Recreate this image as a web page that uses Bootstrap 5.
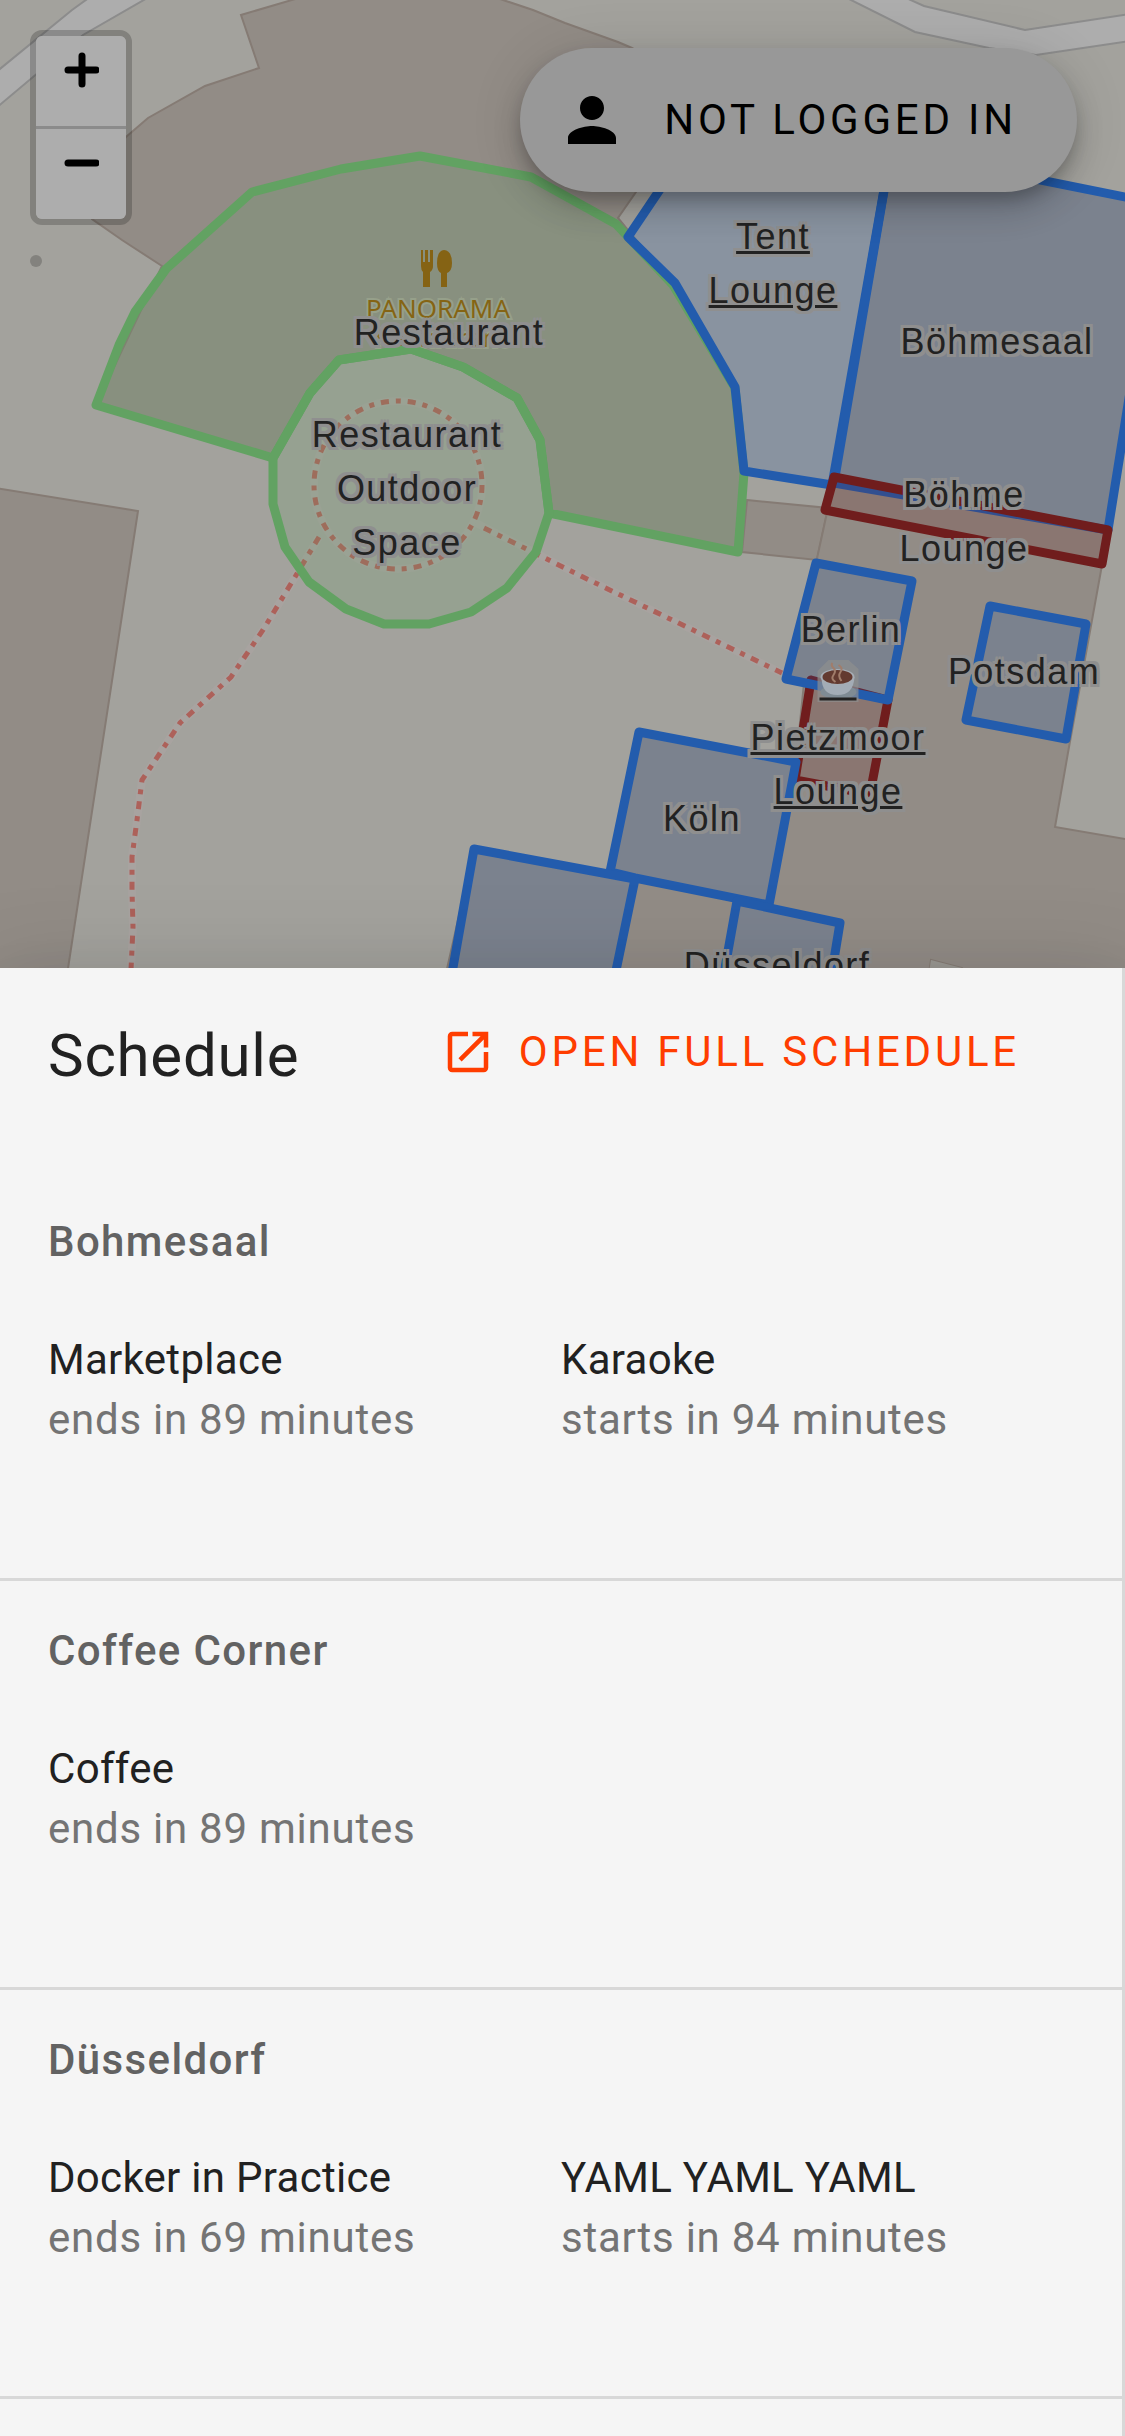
<!DOCTYPE html>
<html lang="en">
<head>
<meta charset="utf-8">
<meta name="viewport" content="width=device-width, initial-scale=1">
<title>Venue map and schedule</title>
<link rel="stylesheet" href="https://cdn.jsdelivr.net/npm/bootstrap@5.3.0/dist/css/bootstrap.min.css">
<style>
  body { font-family: Roboto, "Liberation Sans", sans-serif; background: #f5f5f5; color: #212121; }
  .venue-map { height: 968px; background: #a3a29d; }
  .map-art { position: absolute; top: 0; left: 0; }
  .road { fill: #adadad; stroke: #8c8c8c; stroke-width: 2; }
  .house { fill: #928c86; stroke: #857b74; stroke-width: 2; }
  .walk { fill: none; stroke: #ad615a; stroke-width: 5; stroke-dasharray: 8 7 5 7; }
  .walk-halo { fill: none; stroke: #a8a3a0; stroke-width: 8; }
  .zone { stroke-width: 9; stroke-linejoin: round; fill-opacity: .2; }
  .zone-green { stroke: #62a262; fill: #62a262; }
  .zone-blue { stroke: #235cad; fill: #235cad; }
  .zone-red { stroke: #701d1d; fill: #701d1d; }
  .poi { font: 26px "Noto Sans", sans-serif; fill: #8e5600; stroke: #a3a094; stroke-width: 4; paint-order: stroke; text-anchor: middle; }

  /* Labels pinned to rooms on the map */
  .pin { position: absolute; transform: translateX(-50%); font: 36px/54px "Liberation Sans", Arial, sans-serif; letter-spacing: .04em; color: #222; text-align: center; white-space: nowrap;
    text-shadow: 3px 3px #8f8f8f, -3px 3px #8f8f8f, 3px -3px #8f8f8f, -3px -3px #8f8f8f, 0 3px #8f8f8f, 0 -3px #8f8f8f, 3px 0 #8f8f8f, -3px 0 #8f8f8f; }
  a.pin { text-decoration: underline; }
  .pin-restaurant { left: 449px; top: 306px; }
  .pin-outdoor { left: 407px; top: 408px; }
  .pin-tent { left: 773px; top: 210px; }
  .pin-saal { left: 997px; top: 315px; }
  .pin-bohme { left: 964px; top: 468px; }
  .pin-berlin { left: 851px; top: 603px; }
  .pin-potsdam { left: 1024px; top: 645px; }
  .pin-pietzmoor { left: 838px; top: 657px; }
  .pin-koln { left: 702px; top: 792px; }
  .pin-dussel { left: 777px; top: 939px; }
  .cup { display: block; margin: 0 auto; }

  .map-zoom { position: absolute; left: 30px; top: 30px; border: 6px solid rgba(0,0,0,.2); border-radius: 12px; background-clip: padding-box; }
  .map-zoom button { width: 90px; height: 90px; padding: 16px 0 0; border: 0; background: #adadad; line-height: 1; display: flex; justify-content: center; align-items: flex-start; }
  .map-zoom button:first-child { border-radius: 6px 6px 0 0; box-sizing: content-box; height: 74px; border-bottom: 3px solid #8b8b8b; }
  .map-zoom button:last-child { border-radius: 0 0 6px 6px; }
  .map-dot { position: absolute; left: 30px; top: 255px; width: 12px; height: 12px; border-radius: 50%; background: #83827e; }

  .login-pill { position: absolute; right: 48px; top: 48px; height: 144px; padding: 0 60px 0 36px; gap: 36px; border: 0; border-radius: 72px; background: #989898; color: #000; font-size: 42px; line-height: 48px; letter-spacing: .09em;
    box-shadow: 0 9px 15px -3px rgba(0,0,0,.2), 0 18px 30px rgba(0,0,0,.14), 0 3px 54px rgba(0,0,0,.12); }

  .sheet { position: relative; background: #f5f5f5; border-right: 3px solid #d8d8d8; box-shadow: 0 24px 30px -15px rgba(0,0,0,.2), 0 48px 72px 6px rgba(0,0,0,.14), 0 18px 90px 15px rgba(0,0,0,.12); }
  .sheet-head { height: 204px; padding: 57px 102px 0 48px; }
  .sheet-title { font-size: 60px; line-height: 62px; font-weight: 400; letter-spacing: .0125em; margin: 0; }
  .open-link { gap: 24px; color: #ff3d00; font-size: 42px; line-height: 54px; letter-spacing: .09em; text-decoration: none; }
  .room { padding: 40px 0 128px; border-bottom: 3px solid #d8d8d8; }
  .room h2 { margin: 0 48px 58px; font-size: 42px; line-height: 60px; font-weight: 500; letter-spacing: .033em; color: #626262; }
  .slot { width: 513px; margin-left: 48px; flex: none; font-size: 42px; line-height: 60px; letter-spacing: .007em; }
  .slot p { margin: 0; }
  .slot + .slot { margin-left: 0; }
  .slot .when { color: #747474; letter-spacing: .018em; }
</style>
<script src="https://cdn.jsdelivr.net/npm/bootstrap@5.3.0/dist/js/bootstrap.bundle.min.js"></script>
</head>
<body class="d-flex flex-column vh-100 overflow-hidden">

<section class="venue-map position-relative overflow-hidden flex-shrink-0" aria-label="Venue map">
  <svg class="map-art" width="1125" height="968" viewBox="0 0 1125 968" aria-hidden="true">
    <path class="road" d="M-5 73 72 10 90-3H149L83 35-5 109Z"/>
    <path class="road" d="M845-3 915 32 989 48 1036 55 1130 41V14L1025 30 924 6 904-3Z"/>
    <path class="house" d="M-5 488 138 511 67 975H-5Z"/>
    <path class="house" d="M302-3 241 15 259 68 205 86 148 118 126 137 80 190 92 219 122 240 162 266 96 405 273 458 310 393 339 360 411 349 463 367 517 398 540 440 549 513 738 552 744 473 735 388 673 285 618 218 636 192 700 90 632 48 618 42 565 23 533 10 494-3Z"/>
    <path class="house" d="M747 500 828 508 817 560 742 552Z"/>
    <path class="house" d="M891 150 828 508 816 563 786 679 804 683 796 762 638 732 610 872 474 849 440 1000H970L962 968 931 960 925 1000 1160 1000 1160 845 1055 827 1069 747 1102 565 1160 205Z"/>
    <path d="M931 960 962 968V972H929Z" fill="#9a9893"/>
    <g class="walk-halo">
      <circle cx="398" cy="485" r="84"/>
      <path d="M319 537 295 577 263 630 231 677 180 723 142 780 137 820 132 857V890L133 927 131 970"/>
      <path d="M476 523 583 577 782 673"/>
    </g>
    <g class="walk">
      <circle cx="398" cy="485" r="84"/>
      <path d="M319 537 295 577 263 630 231 677 180 723 142 780 137 820 132 857V890L133 927 131 970"/>
      <path d="M484 528 583 577 782 673"/>
    </g>
    <g fill="#8e5400">
      <path d="M421 250h2v12h2v-12h3v12h2v-12h3v16q0 4-3 6v15h-7v-15q-2-2-2-6z"/>
      <path d="M444 250q8 1 8 13 0 8-5 10v14h-6v-14q-4-2-4-10 0-12 7-13z"/>
    </g>
    <text class="poi" x="438" y="318">PANORAMA</text>
    <text class="poi" x="441" y="347">Restaurant</text>
    <path class="zone zone-green" d="M96 405 119 345 135 312 166 269 252 192 341 169 420 156 531 177 616 224 673 285 735 388 744 473 738 552 549 513 540 440 517 398 463 367 411 349 339 360 310 393 273 458Z"/>
    <path class="zone zone-green" d="M273 458V504L285 547 309 582 346 609 384 624H429L471 612 507 588 536 552 549 513 540 440 517 398 463 367 411 349 339 360 310 393Z"/>
    <path class="zone zone-blue" d="M700 130 628 237 675 283 735 387 744 471 832 485 891 150Z"/>
    <path class="zone zone-blue" d="M891 150 834 483 1108 530 1160 204Z"/>
    <path class="zone zone-red" d="M834 477 1108 530 1102 564 825 510Z"/>
    <path class="zone zone-red" d="M811 680 888 700 870 794 795 780Z"/>
    <path class="zone zone-blue" d="M816 563 912 581 888 700 786 679Z"/>
    <path class="zone zone-blue" d="M990 606 1086 624 1066 739 966 720Z"/>
    <path class="zone zone-blue" d="M639 732 796 762 769 905 635 878 610 872Z"/>
    <path class="zone zone-blue" d="M474 849 560 865 635 879 612 990H449Z"/>
    <path class="zone zone-blue" d="M737 901 840 923 829 990H721Z"/>
  </svg>

  <span class="pin pin-restaurant">Restaurant</span>
  <span class="pin pin-outdoor">Restaurant<br>Outdoor<br>Space</span>
  <a class="pin pin-tent" href="#tent">Tent<br>Lounge</a>
  <span class="pin pin-saal">Böhmesaal</span>
  <span class="pin pin-bohme">Böhme<br>Lounge</span>
  <span class="pin pin-berlin">Berlin</span>
  <span class="pin pin-potsdam">Potsdam</span>
  <a class="pin pin-pietzmoor" href="#pietzmoor">
    <svg class="cup" width="44" height="54" viewBox="0 0 44 54" aria-label="Coffee">
      <path d="M12 3H32L42 12V45H1V14Z" fill="#8f8f8f" opacity=".7"/>
      <ellipse cx="22" cy="35" rx="18" ry="7" fill="#7f8b94"/>
      <path d="M5 20Q5 38 21 38T38 20Z" fill="#a3acb6"/>
      <ellipse cx="21" cy="20" rx="17" ry="8" fill="#a6adb5"/>
      <ellipse cx="21" cy="20" rx="15" ry="7" fill="#633a30"/>
      <path d="M16 6q-2 2 1 5t0 7 2 7M22 8q5 3 2 7t1 9" fill="none" stroke="#a17d6b" stroke-width="2"/>
      <path d="M3 42H40" stroke="#222" stroke-width="3"/>
    </svg>Pietzmoor<br>Lounge</a>
  <span class="pin pin-koln">Köln</span>
  <span class="pin pin-dussel">Düsseldorf</span>

  <div class="map-zoom">
    <button type="button" aria-label="Zoom in"><svg width="36" height="36" viewBox="0 0 36 36"><path d="M19 4V32M5 18H33" stroke="#000" stroke-width="7" stroke-linecap="round"/></svg></button>
    <button type="button" aria-label="Zoom out"><svg width="36" height="36" viewBox="0 0 36 36"><path d="M5 18H33" stroke="#000" stroke-width="7" stroke-linecap="round"/></svg></button>
  </div>
  <span class="map-dot"></span>

  <button type="button" class="login-pill d-flex align-items-center">
    <svg width="72" height="72" viewBox="0 0 24 24" aria-hidden="true"><path d="M12 12c2.210 0 4-1.790 4-4s-1.790-4-4-4-4 1.790-4 4 1.790 4 4 4zm0 2c-2.670 0-8 1.340-8 4v2h16v-2c0-2.660-5.330-4-8-4z"/></svg>
    <span>NOT LOGGED IN</span>
  </button>
</section>

<main class="sheet flex-fill">
  <header class="sheet-head d-flex justify-content-between align-items-start">
    <h1 class="sheet-title">Schedule</h1>
    <a class="open-link d-flex align-items-center" href="#schedule">
      <svg width="54" height="54" viewBox="0 0 24 24" fill="currentColor" aria-hidden="true"><path d="M19 19H5V5h7V3H5c-1.110 0-2 .9-2 2v14c0 1.100.89 2 2 2h14c1.100 0 2-.9 2-2v-7h-2v7zM14 3v2h3.590l-9.830 9.830 1.410 1.410L19 6.410V10h2V3h-7z"/></svg>
      <span>OPEN FULL SCHEDULE</span>
    </a>
  </header>

  <section class="room">
    <h2>Bohmesaal</h2>
    <div class="d-flex">
      <div class="slot"><p>Marketplace</p><p class="when">ends in 89 minutes</p></div>
      <div class="slot"><p>Karaoke</p><p class="when">starts in 94 minutes</p></div>
    </div>
  </section>
  <section class="room">
    <h2>Coffee Corner</h2>
    <div class="d-flex">
      <div class="slot"><p>Coffee</p><p class="when">ends in 89 minutes</p></div>
    </div>
  </section>
  <section class="room">
    <h2>Düsseldorf</h2>
    <div class="d-flex">
      <div class="slot"><p>Docker in Practice</p><p class="when">ends in 69 minutes</p></div>
      <div class="slot"><p>YAML YAML YAML</p><p class="when">starts in 84 minutes</p></div>
    </div>
  </section>
</main>
</body>
</html>
